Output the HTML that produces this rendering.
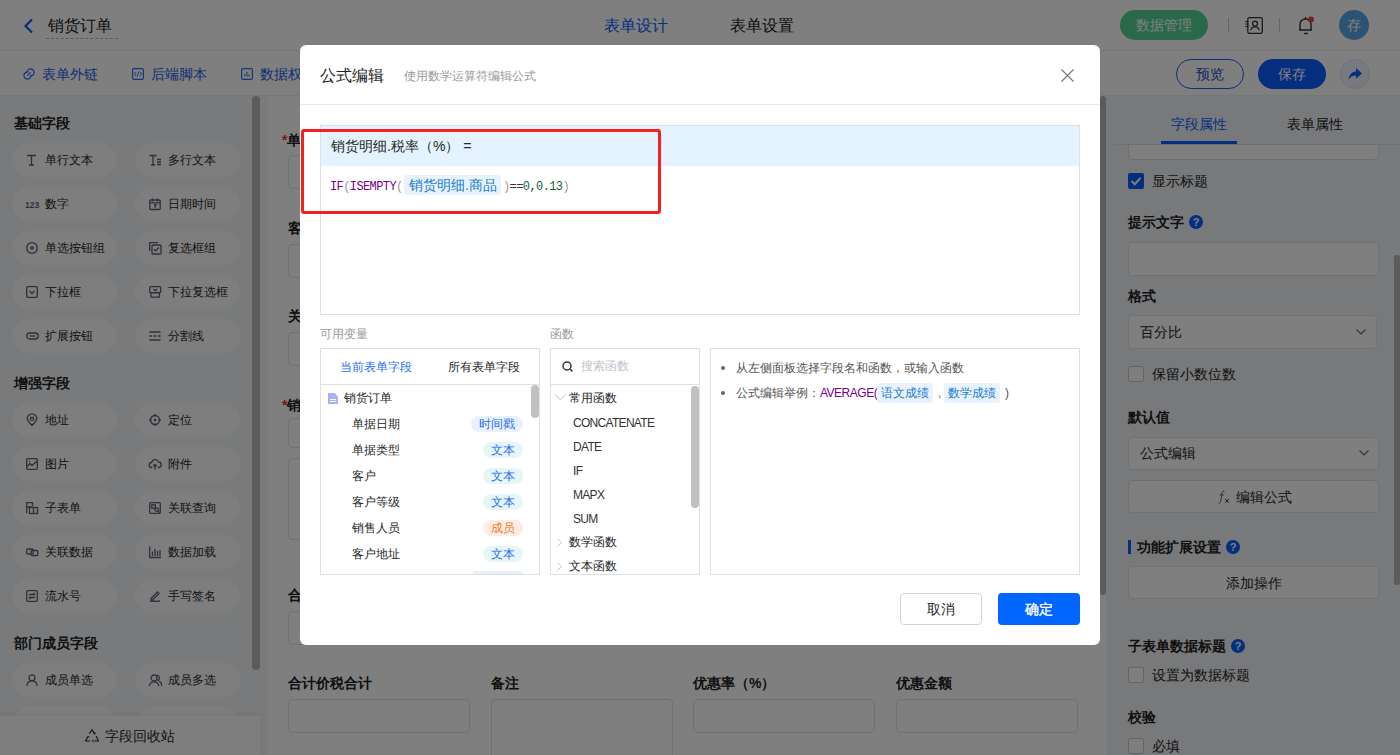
<!DOCTYPE html>
<html><head><meta charset="utf-8"><style>
*{box-sizing:border-box;margin:0;padding:0}
html,body{width:1400px;height:755px;overflow:hidden;font-family:"Liberation Sans",sans-serif;color:#333;background:#fff}
.a{position:absolute}
.t{position:absolute;white-space:nowrap;line-height:1}
.pill{position:absolute;width:105px;height:34px;border-radius:17px;background:#fdfdfe}
.inp{position:absolute;border:1px solid #e0e2e7;border-radius:4px;background:#fff}
svg{position:absolute;overflow:visible}
</style></head><body>
<div class="a" style="left:0;top:0;width:1400px;height:51px;background:#fff;border-bottom:1px solid #ebebeb"></div>
<svg style="left:23px;top:18px" width="11" height="16" viewBox="0 0 11 16"><path d="M9 1.5 L2.5 8 L9 14.5" fill="none" stroke="#0a5cff" stroke-width="2.2"/></svg>
<div class="t" style="left:48px;top:17.5px;font-size:16px;color:#222;">销货订单</div>
<div class="a" style="left:46px;top:38px;width:72px;height:0;border-top:1px dashed #bbb"></div>
<div class="t" style="left:604px;top:17.5px;font-size:16px;color:#0a5cff;">表单设计</div>
<div class="t" style="left:730px;top:17.5px;font-size:16px;color:#222;">表单设置</div>
<div class="a" style="left:1120px;top:10px;width:88px;height:30px;border-radius:15px;background:#52d294"></div>
<div class="t" style="left:1136px;top:18.0px;font-size:14px;color:#fff;">数据管理</div>
<div class="a" style="left:1228px;top:18px;width:1px;height:14px;background:#ccc"></div>
<div class="a" style="left:1279px;top:18px;width:1px;height:14px;background:#ccc"></div>
<svg style="left:1245px;top:17px" width="18" height="17" viewBox="0 0 18 17"><rect x="2.8" y="0.7" width="14.5" height="15.6" rx="1.5" fill="none" stroke="#333" stroke-width="1.3"/><circle cx="10" cy="6.6" r="2.5" fill="none" stroke="#333" stroke-width="1.3"/><path d="M5.8 13.2 A4.3 4.3 0 0 1 14.2 13.2" fill="none" stroke="#333" stroke-width="1.3"/><path d="M0.3 4.5h3M0.3 7h3M0.3 9.5h3" stroke="#333" stroke-width="1.1"/></svg>
<svg style="left:1297px;top:16px" width="18" height="19" viewBox="0 0 18 19"><path d="M3 14 V8.5 A5.5 5.5 0 0 1 14 8.5 V14 H2 M4 14h11" fill="none" stroke="#333" stroke-width="1.4"/><path d="M7 17.5h4" stroke="#333" stroke-width="1.4"/><path d="M8.5 1v2" stroke="#333" stroke-width="1.3"/><circle cx="14" cy="3.5" r="3" fill="#f04040"/></svg>
<div class="a" style="left:1339px;top:10px;width:30px;height:30px;border-radius:15px;background:#5aa6e8"></div>
<div class="t" style="left:1347px;top:17.5px;font-size:14px;color:#fff;">存</div>
<div class="a" style="left:0;top:51px;width:1400px;height:44px;background:#fff"></div>
<svg style="left:23px;top:68px" width="12" height="12" viewBox="0 0 12 12"><path d="M8.05 6.87 A3.6 3.6 0 1 1 5.13 3.95 M3.95 5.13 A3.6 3.6 0 1 1 6.88 8.05 M4.4 7.6 L7.6 4.4" fill="none" stroke="#2a6cf0" stroke-width="1.2"/></svg>
<div class="t" style="left:42px;top:67.0px;font-size:14px;color:#1d5ce6;">表单外链</div>
<svg style="left:132px;top:68px" width="12" height="12" viewBox="0 0 12 12"><rect x="0.6" y="0.6" width="10.8" height="10.8" rx="1.5" fill="none" stroke="#2a6cf0" stroke-width="1.2"/><path d="M4 4 L2.5 6 L4 8 M8 4 L9.5 6 L8 8 M6.8 3.5 L5.2 8.5" fill="none" stroke="#2a6cf0" stroke-width="0.9"/></svg>
<div class="t" style="left:151px;top:67.0px;font-size:14px;color:#1d5ce6;">后端脚本</div>
<svg style="left:241px;top:68px" width="12" height="12" viewBox="0 0 12 12"><rect x="0.6" y="0.6" width="10.8" height="10.8" rx="1.5" fill="none" stroke="#2a6cf0" stroke-width="1.2"/><path d="M4 8.5V6 M6 8.5V4 M8 8.5V6.5" stroke="#2a6cf0" stroke-width="1"/></svg>
<div class="t" style="left:260px;top:67.0px;font-size:14px;color:#1d5ce6;">数据权限</div>
<div class="a" style="left:1176px;top:59px;width:68px;height:30px;border-radius:15px;border:1px solid #1a5ff0;background:#fff"></div>
<div class="t" style="left:1196px;top:67.0px;font-size:14px;color:#1a4fc8;">预览</div>
<div class="a" style="left:1258px;top:59px;width:68px;height:30px;border-radius:15px;background:#0a5cff"></div>
<div class="t" style="left:1278px;top:67.0px;font-size:14px;color:#fff;">保存</div>
<div class="a" style="left:1340px;top:59px;width:30px;height:30px;border-radius:15px;border:1px solid #d8e2f8;background:#eef3fd"></div>
<svg style="left:1347px;top:66px" width="16" height="16" viewBox="0 0 16 16"><path d="M9 2 L15 7.5 L9 12.5 V9.5 C5 9.5 3 11 1.5 14 C2 9 4.5 5.8 9 5.5 Z" fill="#0a5cff"/></svg>
<div class="a" style="left:0;top:95px;width:1400px;height:1px;background:#eee"></div>
<div class="a" style="left:0;top:96px;width:268px;height:659px;background:#f3f4f7"></div>
<div class="a" style="left:252px;top:96px;width:8px;height:574px;border-radius:4px;background:#b6b6b6"></div>
<div class="t" style="left:14px;top:116.0px;font-size:14px;color:#222;font-weight:bold">基础字段</div>
<div class="pill" style="left:12px;top:143px"></div>
<svg style="left:26px;top:154px" width="12" height="12" viewBox="0 0 12 12"><path d="M1 1.5h9M5.5 1.5v9.5M3 11h5" fill="none" stroke="#5a6274" stroke-width="1.3"/></svg>
<div class="t" style="left:45px;top:153.9px;font-size:12px;color:#262626;">单行文本</div>
<div class="pill" style="left:135px;top:143px"></div>
<svg style="left:149px;top:154px" width="12" height="12" viewBox="0 0 12 12"><path d="M0.5 1.5h7M4 1.5v9.5M2 11h4M8 5.5h4M8 8h4M8 10.5h4" fill="none" stroke="#5a6274" stroke-width="1.3"/></svg>
<div class="t" style="left:168px;top:153.9px;font-size:12px;color:#262626;">多行文本</div>
<div class="pill" style="left:12px;top:187px"></div>
<svg style="left:26px;top:198px" width="12" height="12" viewBox="0 0 12 12"><text x="-1" y="9.5" font-size="8.5" font-weight="bold" fill="#5a6274" font-family="Liberation Sans">123</text></svg>
<div class="t" style="left:45px;top:197.9px;font-size:12px;color:#262626;">数字</div>
<div class="pill" style="left:135px;top:187px"></div>
<svg style="left:149px;top:198px" width="12" height="12" viewBox="0 0 12 12"><rect x="0.8" y="2" width="10.4" height="9.5" rx="1" fill="none" stroke="#5a6274" stroke-width="1.3"/><path d="M3.5 0.5v3M8.5 0.5v3M0.8 4.8h10.4M5 7h2l-1.2 3" fill="none" stroke="#5a6274" stroke-width="1.3"/></svg>
<div class="t" style="left:168px;top:197.9px;font-size:12px;color:#262626;">日期时间</div>
<div class="pill" style="left:12px;top:231px"></div>
<svg style="left:26px;top:242px" width="12" height="12" viewBox="0 0 12 12"><circle cx="6" cy="6" r="5.3" fill="none" stroke="#5a6274" stroke-width="1.3"/><circle cx="6" cy="6" r="1.8" fill="#5a6274"/></svg>
<div class="t" style="left:45px;top:241.9px;font-size:12px;color:#262626;">单选按钮组</div>
<div class="pill" style="left:135px;top:231px"></div>
<svg style="left:149px;top:242px" width="12" height="12" viewBox="0 0 12 12"><path d="M0.7 9V0.7H9" fill="none" stroke="#5a6274" stroke-width="1.3"/><rect x="3" y="3" width="9" height="9" rx="1" fill="none" stroke="#5a6274" stroke-width="1.3"/><path d="M5 7.3l1.6 1.6L10 5.5" fill="none" stroke="#5a6274" stroke-width="1.3"/></svg>
<div class="t" style="left:168px;top:241.9px;font-size:12px;color:#262626;">复选框组</div>
<div class="pill" style="left:12px;top:275px"></div>
<svg style="left:26px;top:286px" width="12" height="12" viewBox="0 0 12 12"><rect x="0.7" y="0.7" width="10.6" height="10.6" rx="1" fill="none" stroke="#5a6274" stroke-width="1.3"/><path d="M3.5 5l2.5 2.5L8.5 5" fill="none" stroke="#5a6274" stroke-width="1.3"/></svg>
<div class="t" style="left:45px;top:285.9px;font-size:12px;color:#262626;">下拉框</div>
<div class="pill" style="left:135px;top:275px"></div>
<svg style="left:149px;top:286px" width="12" height="12" viewBox="0 0 12 12"><rect x="0.7" y="0.7" width="11" height="6" rx="1" fill="none" stroke="#5a6274" stroke-width="1.3"/><rect x="2" y="6.7" width="8.5" height="4.5" rx="0.5" fill="none" stroke="#5a6274" stroke-width="1.3"/><path d="M4.5 3l1.7 1.7L8 3" fill="none" stroke="#5a6274" stroke-width="1.3"/></svg>
<div class="t" style="left:168px;top:285.9px;font-size:12px;color:#262626;">下拉复选框</div>
<div class="pill" style="left:12px;top:319px"></div>
<svg style="left:26px;top:330px" width="12" height="12" viewBox="0 0 12 12"><rect x="0.7" y="3" width="11.6" height="6" rx="3" fill="none" stroke="#5a6274" stroke-width="1.3"/><path d="M3.5 6h6" fill="none" stroke="#5a6274" stroke-width="1.3"/></svg>
<div class="t" style="left:45px;top:329.9px;font-size:12px;color:#262626;">扩展按钮</div>
<div class="pill" style="left:135px;top:319px"></div>
<svg style="left:149px;top:330px" width="12" height="12" viewBox="0 0 12 12"><path d="M0.5 2h11M0.5 6h2.5M4.5 6h3M9 6h2.5M0.5 10h11" fill="none" stroke="#5a6274" stroke-width="1.3"/></svg>
<div class="t" style="left:168px;top:329.9px;font-size:12px;color:#262626;">分割线</div>
<div class="t" style="left:14px;top:376.0px;font-size:14px;color:#222;font-weight:bold">增强字段</div>
<div class="pill" style="left:12px;top:403px"></div>
<svg style="left:26px;top:414px" width="12" height="12" viewBox="0 0 12 12"><path d="M6 11.5C3 8.5 1.2 6.5 1.2 4.6A4.8 4.8 0 0 1 10.8 4.6C10.8 6.5 9 8.5 6 11.5Z" fill="none" stroke="#5a6274" stroke-width="1.3"/><circle cx="6" cy="4.7" r="1.6" fill="none" stroke="#5a6274" stroke-width="1.3"/></svg>
<div class="t" style="left:45px;top:413.9px;font-size:12px;color:#262626;">地址</div>
<div class="pill" style="left:135px;top:403px"></div>
<svg style="left:149px;top:414px" width="12" height="12" viewBox="0 0 12 12"><circle cx="6" cy="6" r="4.5" fill="none" stroke="#5a6274" stroke-width="1.3"/><circle cx="6" cy="6" r="1.3" fill="#5a6274"/><path d="M6 0v2.5M6 9.5V12M0 6h2.5M9.5 6H12" fill="none" stroke="#5a6274" stroke-width="1.3"/></svg>
<div class="t" style="left:168px;top:413.9px;font-size:12px;color:#262626;">定位</div>
<div class="pill" style="left:12px;top:447px"></div>
<svg style="left:26px;top:458px" width="12" height="12" viewBox="0 0 12 12"><rect x="0.7" y="0.7" width="10.6" height="10.6" rx="1.2" fill="none" stroke="#5a6274" stroke-width="1.3"/><path d="M1 8.5l3-3 2 2L11 3M3 3.5h1" fill="none" stroke="#5a6274" stroke-width="1.3"/></svg>
<div class="t" style="left:45px;top:457.9px;font-size:12px;color:#262626;">图片</div>
<div class="pill" style="left:135px;top:447px"></div>
<svg style="left:149px;top:458px" width="12" height="12" viewBox="0 0 12 12"><path d="M3.2 9.5H2.8A2.5 2.5 0 0 1 2.6 4.5 3.6 3.6 0 0 1 9.5 4 2.7 2.7 0 0 1 9.5 9.5H8.8M6 11.5V6.5M4.2 8.2L6 6.4l1.8 1.8" fill="none" stroke="#5a6274" stroke-width="1.3"/></svg>
<div class="t" style="left:168px;top:457.9px;font-size:12px;color:#262626;">附件</div>
<div class="pill" style="left:12px;top:491px"></div>
<svg style="left:26px;top:502px" width="12" height="12" viewBox="0 0 12 12"><path d="M0.7 11.3V0.7H6.5V4M0.7 5H6.5" fill="none" stroke="#5a6274" stroke-width="1.3"/><rect x="3.5" y="5.5" width="8" height="6" fill="none" stroke="#5a6274" stroke-width="1.3"/><path d="M7.5 5.5v6" fill="none" stroke="#5a6274" stroke-width="1.3"/></svg>
<div class="t" style="left:45px;top:501.9px;font-size:12px;color:#262626;">子表单</div>
<div class="pill" style="left:135px;top:491px"></div>
<svg style="left:149px;top:502px" width="12" height="12" viewBox="0 0 12 12"><rect x="0.7" y="0.7" width="10.6" height="10.6" rx="1" fill="none" stroke="#5a6274" stroke-width="1.3"/><rect x="2.8" y="2.8" width="3.5" height="3.5" fill="none" stroke="#5a6274" stroke-width="1.3"/><circle cx="7.6" cy="7.6" r="1.8" fill="none" stroke="#5a6274" stroke-width="1.3"/><path d="M9 9l2 2" fill="none" stroke="#5a6274" stroke-width="1.3"/></svg>
<div class="t" style="left:168px;top:501.9px;font-size:12px;color:#262626;">关联查询</div>
<div class="pill" style="left:12px;top:535px"></div>
<svg style="left:26px;top:546px" width="12" height="12" viewBox="0 0 12 12"><rect x="0.7" y="3" width="6.5" height="5" rx="1" fill="none" stroke="#5a6274" stroke-width="1.3"/><rect x="5" y="4.5" width="6.8" height="5" rx="1" fill="none" stroke="#5a6274" stroke-width="1.3"/></svg>
<div class="t" style="left:45px;top:545.9px;font-size:12px;color:#262626;">关联数据</div>
<div class="pill" style="left:135px;top:535px"></div>
<svg style="left:149px;top:546px" width="12" height="12" viewBox="0 0 12 12"><path d="M0.7 0.5v11h11.3M3.5 10V5.5M6 10V3M8.5 10V5M11 10V4" fill="none" stroke="#5a6274" stroke-width="1.3"/></svg>
<div class="t" style="left:168px;top:545.9px;font-size:12px;color:#262626;">数据加载</div>
<div class="pill" style="left:12px;top:579px"></div>
<svg style="left:26px;top:590px" width="12" height="12" viewBox="0 0 12 12"><rect x="0.7" y="0.7" width="10.6" height="10.6" rx="1" fill="none" stroke="#5a6274" stroke-width="1.3"/><path d="M3 4.5h6M3 7.5h6M7.5 3l1.5 1.5M4.5 9L3 7.5" fill="none" stroke="#5a6274" stroke-width="1.3"/></svg>
<div class="t" style="left:45px;top:589.9px;font-size:12px;color:#262626;">流水号</div>
<div class="pill" style="left:135px;top:579px"></div>
<svg style="left:149px;top:590px" width="12" height="12" viewBox="0 0 12 12"><path d="M2 8.5L8.5 2l1.5 1.5L3.5 10H2Z M1 11.5c3-1 5 .5 10-0.5" fill="none" stroke="#5a6274" stroke-width="1.3"/></svg>
<div class="t" style="left:168px;top:589.9px;font-size:12px;color:#262626;">手写签名</div>
<div class="t" style="left:14px;top:636.0px;font-size:14px;color:#222;font-weight:bold">部门成员字段</div>
<div class="pill" style="left:12px;top:663px"></div>
<svg style="left:26px;top:674px" width="12" height="12" viewBox="0 0 12 12"><circle cx="6" cy="3.8" r="3" fill="none" stroke="#5a6274" stroke-width="1.3"/><path d="M0.8 12A5.2 5.2 0 0 1 11.2 12" fill="none" stroke="#5a6274" stroke-width="1.3"/></svg>
<div class="t" style="left:45px;top:673.9px;font-size:12px;color:#262626;">成员单选</div>
<div class="pill" style="left:135px;top:663px"></div>
<svg style="left:149px;top:674px" width="12" height="12" viewBox="0 0 12 12"><circle cx="5" cy="4" r="3" fill="none" stroke="#5a6274" stroke-width="1.3"/><path d="M0.3 12A4.8 4.8 0 0 1 9.8 12M8 1.2A2.8 2.8 0 0 1 8.5 6.6M10 7.2A4.5 4.5 0 0 1 12.5 12" fill="none" stroke="#5a6274" stroke-width="1.3"/></svg>
<div class="t" style="left:168px;top:673.9px;font-size:12px;color:#262626;">成员多选</div>
<div class="pill" style="left:12px;top:707px"></div><div class="pill" style="left:135px;top:707px"></div>
<div class="a" style="left:0;top:716px;width:260px;height:39px;background:#fdfdfd;box-shadow:0 -3px 6px rgba(0,0,0,0.05)"></div>
<svg style="left:85px;top:729px" width="14" height="13" viewBox="0 0 14 13"><path d="M4.3 4.6 L7 0.8 L9.6 4.8 M11.2 7 L13.4 12 H8.6 M5.2 12 H0.6 L3 7.6" fill="none" stroke="#333" stroke-width="1.2"/><path d="M8.3 4 L9.8 5.3 L10.3 3.4 M8.2 10.8 L7.2 12 L8.4 13.2 M2 8.7 L3.1 7.3 L4.6 8.2" fill="none" stroke="#333" stroke-width="1"/></svg>
<div class="t" style="left:105px;top:729.0px;font-size:14px;color:#262626;">字段回收站</div>
<div class="a" style="left:268px;top:96px;width:832px;height:659px;background:#fff"></div>
<div class="t" style="left:282px;top:133.0px;font-size:14px;color:#222;font-weight:bold"><span style="color:#e33">*</span>单据日期</div>
<div class="inp" style="left:288px;top:155px;width:182px;height:34px"></div>
<div class="t" style="left:288px;top:221.0px;font-size:14px;color:#222;font-weight:bold">客户</div>
<div class="inp" style="left:288px;top:244px;width:182px;height:34px"></div>
<div class="t" style="left:288px;top:309.0px;font-size:14px;color:#222;font-weight:bold">关联</div>
<div class="inp" style="left:288px;top:332px;width:182px;height:34px"></div>
<div class="t" style="left:282px;top:398.0px;font-size:14px;color:#222;font-weight:bold"><span style="color:#e33">*</span>销货明细</div>
<div class="inp" style="left:288px;top:418px;width:800px;height:30px"></div>
<div class="inp" style="left:288px;top:458px;width:800px;height:82px"></div>
<div class="t" style="left:288px;top:588.0px;font-size:14px;color:#222;font-weight:bold">合计</div>
<div class="inp" style="left:288px;top:611px;width:182px;height:34px"></div>
<div class="t" style="left:288px;top:676.0px;font-size:14px;color:#222;font-weight:bold">合计价税合计</div>
<div class="inp" style="left:288px;top:699px;width:182px;height:34px"></div>
<div class="t" style="left:491px;top:676.0px;font-size:14px;color:#222;font-weight:bold">备注</div>
<div class="inp" style="left:491px;top:699px;width:182px;height:80px"></div>
<div class="t" style="left:693px;top:676.0px;font-size:14px;color:#222;font-weight:bold">优惠率（%）</div>
<div class="inp" style="left:693px;top:699px;width:182px;height:34px"></div>
<div class="t" style="left:896px;top:676.0px;font-size:14px;color:#222;font-weight:bold">优惠金额</div>
<div class="inp" style="left:896px;top:699px;width:182px;height:34px"></div>
<div class="a" style="left:1100px;top:96px;width:6px;height:499px;border-radius:3px;background:#b6b6b6"></div>
<div class="a" style="left:1106px;top:96px;width:294px;height:659px;background:#f1f2f5"></div>
<div class="inp" style="left:1128px;top:130px;width:251px;height:30px;border-radius:4px"></div>
<div class="a" style="left:1106px;top:96px;width:294px;height:49px;background:#f1f2f5"></div>
<div class="t" style="left:1171px;top:117.0px;font-size:14px;color:#0a5cff;">字段属性</div>
<div class="t" style="left:1287px;top:117.0px;font-size:14px;color:#222;">表单属性</div>
<div class="a" style="left:1114px;top:144px;width:286px;height:1px;background:#dfe1e6"></div>
<div class="a" style="left:1161px;top:141px;width:76px;height:3px;background:#0a5cff"></div>
<div class="a" style="left:1128px;top:173px;width:16px;height:16px;border-radius:2px;background:#0a5cff"></div>
<svg style="left:1128px;top:173px" width="16" height="16" viewBox="0 0 16 16"><path d="M3.5 8 L6.8 11.2 L12.5 4.8" fill="none" stroke="#fff" stroke-width="2"/></svg>
<div class="t" style="left:1152px;top:174.0px;font-size:14px;color:#262626;">显示标题</div>
<div class="t" style="left:1128px;top:215.0px;font-size:14px;color:#222;font-weight:bold">提示文字</div>
<div class="a" style="left:1189px;top:215px;width:14px;height:14px;border-radius:7px;background:#0a5cff;color:#fff;font-size:11px;font-weight:bold;line-height:14px;text-align:center">?</div>
<div class="inp" style="left:1128px;top:242px;width:251px;height:34px"></div>
<div class="t" style="left:1128px;top:289.0px;font-size:14px;color:#222;font-weight:bold">格式</div>
<div class="inp" style="left:1128px;top:315px;width:249px;height:34px"></div>
<div class="t" style="left:1140px;top:325.0px;font-size:14px;color:#262626;">百分比</div>
<svg style="left:1356px;top:329px" width="10" height="6" viewBox="0 0 10 6"><path d="M0.5 0.5 L5 5 L9.5 0.5" fill="none" stroke="#666" stroke-width="1.2"/></svg>
<div class="a" style="left:1128px;top:366px;width:16px;height:16px;border-radius:2px;border:1px solid #c8c8c8;background:#fff"></div>
<div class="t" style="left:1152px;top:367.0px;font-size:14px;color:#262626;">保留小数位数</div>
<div class="t" style="left:1128px;top:410.0px;font-size:14px;color:#222;font-weight:bold">默认值</div>
<div class="inp" style="left:1128px;top:437px;width:251px;height:33px"></div>
<div class="t" style="left:1140px;top:446.0px;font-size:14px;color:#262626;">公式编辑</div>
<svg style="left:1359px;top:450px" width="10" height="6" viewBox="0 0 10 6"><path d="M0.5 0.5 L5 5 L9.5 0.5" fill="none" stroke="#666" stroke-width="1.2"/></svg>
<div class="inp" style="left:1128px;top:480px;width:251px;height:33px"></div>
<svg style="left:1218px;top:490px" width="14" height="14" viewBox="0 0 14 14"><path d="M6.5 1.2 C5.2 0.6 4.3 1.5 4 3 L2.6 11.5 C2.3 13 1.5 13.5 0.5 13" fill="none" stroke="#555" stroke-width="0.9"/><path d="M1.8 5 H5.8" stroke="#555" stroke-width="0.9"/><path d="M7.2 8.8 L10.8 12.8 M10.8 8.8 L7.2 12.8" stroke="#333" stroke-width="1"/></svg>
<div class="t" style="left:1236px;top:490.0px;font-size:14px;color:#262626;">编辑公式</div>
<div class="a" style="left:1128px;top:540px;width:3px;height:14px;background:#0a5cff"></div>
<div class="t" style="left:1137px;top:540.0px;font-size:14px;color:#222;font-weight:bold">功能扩展设置</div>
<div class="a" style="left:1226px;top:540px;width:14px;height:14px;border-radius:7px;background:#0a5cff;color:#fff;font-size:11px;font-weight:bold;line-height:14px;text-align:center">?</div>
<div class="inp" style="left:1128px;top:566px;width:251px;height:33px"></div>
<div class="t" style="left:1226px;top:576.0px;font-size:14px;color:#262626;">添加操作</div>
<div class="t" style="left:1128px;top:639.0px;font-size:14px;color:#222;font-weight:bold">子表单数据标题</div>
<div class="a" style="left:1231px;top:639px;width:14px;height:14px;border-radius:7px;background:#0a5cff;color:#fff;font-size:11px;font-weight:bold;line-height:14px;text-align:center">?</div>
<div class="a" style="left:1128px;top:667px;width:16px;height:16px;border-radius:2px;border:1px solid #c8c8c8;background:#fff"></div>
<div class="t" style="left:1152px;top:668.0px;font-size:14px;color:#262626;">设置为数据标题</div>
<div class="t" style="left:1128px;top:710.0px;font-size:14px;color:#222;font-weight:bold">校验</div>
<div class="a" style="left:1128px;top:738px;width:16px;height:16px;border-radius:2px;border:1px solid #c8c8c8;background:#fff"></div>
<div class="t" style="left:1152px;top:739.0px;font-size:14px;color:#262626;">必填</div>
<div class="a" style="left:1394px;top:255px;width:6px;height:330px;border-radius:3px;background:#b6b6b6"></div>
<div class="a" style="left:0;top:0;width:1400px;height:755px;background:rgba(0,0,0,.5)"></div>
<div class="a" style="left:300px;top:45px;width:800px;height:600px;background:#fff;border-radius:6px"></div>
<div class="t" style="left:320px;top:68.0px;font-size:16px;color:#222;">公式编辑</div>
<div class="t" style="left:404px;top:69.9px;font-size:12px;color:#999;">使用数学运算符编辑公式</div>
<svg style="left:1061px;top:69px" width="13" height="13" viewBox="0 0 13 13"><path d="M0.5 0.5 L12.5 12.5 M12.5 0.5 L0.5 12.5" stroke="#777" stroke-width="1.15"/></svg>
<div class="a" style="left:300px;top:104px;width:800px;height:1px;background:#e8e8e8"></div>
<div class="a" style="left:320px;top:125px;width:760px;height:190px;border:1px solid #e0e0e0"></div>
<div class="a" style="left:321px;top:126px;width:758px;height:40px;background:#e4f3ff"></div>
<div class="t" style="left:331px;top:139.0px;font-size:14px;color:#262626;">销货明细.税率（%） =</div>
<div class="t" style="left:330px;top:181px;font-size:12px;letter-spacing:-0.6px;font-family:'Liberation Mono',monospace;color:#333"><span style="color:#770088">IF</span><span style="color:#999">(</span><span style="color:#770088">ISEMPTY</span><span style="color:#999">(</span></div>
<div class="a" style="left:404px;top:175px;width:97px;height:20px;border-radius:3px;background:#e8f3fe"></div>
<div class="t" style="left:409px;top:178.0px;font-size:14px;color:#1a7ccf;">销货明细.商品</div>
<div class="t" style="left:503px;top:181px;font-size:12px;letter-spacing:-0.6px;font-family:'Liberation Mono',monospace;color:#333"><span style="color:#999">)</span>==<span style="color:#116644">0</span>,<span style="color:#116644">0.13</span><span style="color:#999">)</span></div>
<div class="a" style="left:301px;top:129px;width:360px;height:85px;border:3px solid #f52020;border-radius:3px"></div>
<div class="t" style="left:320px;top:327.9px;font-size:12px;color:#999;">可用变量</div>
<div class="t" style="left:550px;top:327.9px;font-size:12px;color:#999;">函数</div>
<div class="a" style="left:320px;top:348px;width:220px;height:227px;border:1px solid #e0e0e0;background:#fff"></div>
<div class="a" style="left:321px;top:384px;width:218px;height:1px;background:#e0e0e0"></div>
<div class="t" style="left:340px;top:360.9px;font-size:12px;color:#2b6ef6;">当前表单字段</div>
<div class="t" style="left:448px;top:360.9px;font-size:12px;color:#262626;">所有表单字段</div>
<svg style="left:328px;top:393px" width="10" height="11" viewBox="0 0 10 11"><path d="M0 0 H6.5 L10 3.5 V11 H0 Z" fill="#a7b1ff"/><path d="M2 6.5 H8 M2 8.5 H8" stroke="#fff" stroke-width="1"/></svg>
<div class="t" style="left:344px;top:391.9px;font-size:12px;color:#262626;">销货订单</div>
<div class="a" style="left:531px;top:385px;width:8px;height:33px;border-radius:4px;background:#c1c1c1"></div>
<div class="t" style="left:352px;top:417.9px;font-size:12px;color:#262626;">单据日期</div>
<div class="a" style="left:471px;top:416px;width:52px;height:16px;border-radius:8px;background:#e8f1fe"></div>
<div class="t" style="left:479.0px;top:417.9px;font-size:12px;color:#2b6ef6;">时间戳</div>
<div class="t" style="left:352px;top:443.9px;font-size:12px;color:#262626;">单据类型</div>
<div class="a" style="left:483px;top:442px;width:40px;height:16px;border-radius:8px;background:#e6f6f6"></div>
<div class="t" style="left:491.0px;top:443.9px;font-size:12px;color:#2b6ef6;">文本</div>
<div class="t" style="left:352px;top:469.9px;font-size:12px;color:#262626;">客户</div>
<div class="a" style="left:483px;top:468px;width:40px;height:16px;border-radius:8px;background:#e6f6f6"></div>
<div class="t" style="left:491.0px;top:469.9px;font-size:12px;color:#2b6ef6;">文本</div>
<div class="t" style="left:352px;top:495.9px;font-size:12px;color:#262626;">客户等级</div>
<div class="a" style="left:483px;top:494px;width:40px;height:16px;border-radius:8px;background:#e6f6f6"></div>
<div class="t" style="left:491.0px;top:495.9px;font-size:12px;color:#2b6ef6;">文本</div>
<div class="t" style="left:352px;top:521.9px;font-size:12px;color:#262626;">销售人员</div>
<div class="a" style="left:483px;top:520px;width:40px;height:16px;border-radius:8px;background:#fdeee5"></div>
<div class="t" style="left:491.0px;top:521.9px;font-size:12px;color:#f27a30;">成员</div>
<div class="t" style="left:352px;top:547.9px;font-size:12px;color:#262626;">客户地址</div>
<div class="a" style="left:483px;top:546px;width:40px;height:16px;border-radius:8px;background:#e6f6f6"></div>
<div class="t" style="left:491.0px;top:547.9px;font-size:12px;color:#2b6ef6;">文本</div>
<div class="a" style="left:473px;top:571px;width:50px;height:3px;border-radius:4px 4px 0 0;background:#e8f1fe"></div>
<div class="a" style="left:550px;top:348px;width:150px;height:227px;border:1px solid #e0e0e0;background:#fff"></div>
<div class="a" style="left:551px;top:384px;width:148px;height:1px;background:#e0e0e0"></div>
<svg style="left:562px;top:361px" width="11" height="11" viewBox="0 0 11 11"><circle cx="5" cy="5" r="4" fill="none" stroke="#333" stroke-width="1.5"/><path d="M8 8 L10.5 10.5" stroke="#333" stroke-width="1.5"/></svg>
<div class="t" style="left:581px;top:359.9px;font-size:12px;color:#c0c4cc;">搜索函数</div>
<svg style="left:555px;top:394px" width="11" height="7" viewBox="0 0 11 7"><path d="M0.5 0.5 L5.5 6 L10.5 0.5" fill="none" stroke="#c0c4cc" stroke-width="1"/></svg>
<div class="t" style="left:569px;top:391.9px;font-size:12px;color:#262626;">常用函数</div>
<div class="t" style="left:573px;top:417px;font-size:12px;letter-spacing:-0.7px;color:#333">CONCATENATE</div>
<div class="t" style="left:573px;top:441px;font-size:12px;letter-spacing:-0.7px;color:#333">DATE</div>
<div class="t" style="left:573px;top:465px;font-size:12px;letter-spacing:-0.7px;color:#333">IF</div>
<div class="t" style="left:573px;top:489px;font-size:12px;letter-spacing:-0.7px;color:#333">MAPX</div>
<div class="t" style="left:573px;top:513px;font-size:12px;letter-spacing:-0.7px;color:#333">SUM</div>
<svg style="left:557px;top:538px" width="5" height="9" viewBox="0 0 5 9"><path d="M0.5 0.5 L4.5 4.5 L0.5 8.5" fill="none" stroke="#c0c4cc" stroke-width="1"/></svg>
<div class="t" style="left:569px;top:535.9px;font-size:12px;color:#262626;">数学函数</div>
<svg style="left:557px;top:562px" width="5" height="9" viewBox="0 0 5 9"><path d="M0.5 0.5 L4.5 4.5 L0.5 8.5" fill="none" stroke="#c0c4cc" stroke-width="1"/></svg>
<div class="t" style="left:569px;top:559.9px;font-size:12px;color:#262626;">文本函数</div>
<div class="a" style="left:691px;top:386px;width:8px;height:122px;border-radius:4px;background:#c1c1c1"></div>
<div class="a" style="left:710px;top:348px;width:370px;height:227px;border:1px solid #e0e0e0;background:#fff"></div>
<div class="a" style="left:721px;top:366px;width:4px;height:4px;border-radius:2px;background:#666"></div>
<div class="a" style="left:721px;top:391px;width:4px;height:4px;border-radius:2px;background:#666"></div>
<div class="t" style="left:736px;top:361.9px;font-size:12px;color:#555;">从左侧面板选择字段名和函数，或输入函数</div>
<div class="t" style="left:736px;top:386.9px;font-size:12px;color:#555;">公式编辑举例：<span style="color:#770088;letter-spacing:-0.5px">AVERAGE(</span></div>
<div class="a" style="left:877px;top:383px;width:56px;height:20px;border-radius:3px;background:#e8f3fe"></div>
<div class="t" style="left:881px;top:386.9px;font-size:12px;color:#1a7ccf;">语文成绩</div>
<div class="t" style="left:938px;top:386.9px;font-size:12px;color:#777;">,</div>
<div class="a" style="left:944px;top:383px;width:56px;height:20px;border-radius:3px;background:#e8f3fe"></div>
<div class="t" style="left:948px;top:386.9px;font-size:12px;color:#1a7ccf;">数学成绩</div>
<div class="t" style="left:1005px;top:386.9px;font-size:12px;color:#555;">)</div>
<div class="a" style="left:900px;top:593px;width:82px;height:32px;border:1px solid #d0d3d9;border-radius:4px;background:#fff"></div>
<div class="t" style="left:927px;top:602.0px;font-size:14px;color:#262626;">取消</div>
<div class="a" style="left:998px;top:593px;width:82px;height:32px;border-radius:4px;background:#0066ff"></div>
<div class="t" style="left:1025px;top:602.0px;font-size:14px;color:#fff;-webkit-text-stroke:0.35px #fff">确定</div>
</body></html>
